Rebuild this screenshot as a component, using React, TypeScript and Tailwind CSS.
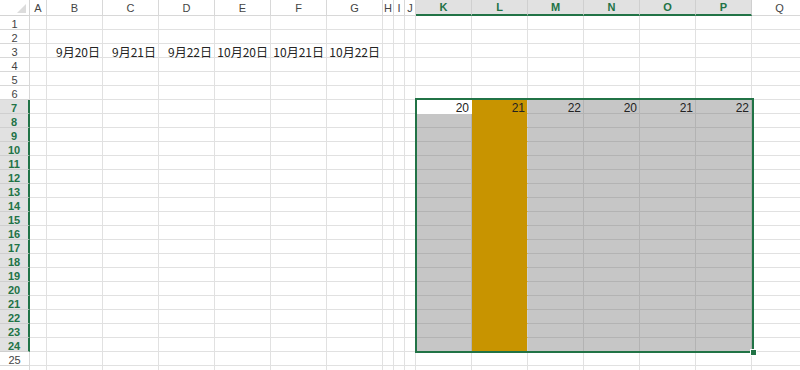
import React from "react";

const COLS = ["A", "B", "C", "D", "E", "F", "G", "H", "I", "J", "K", "L", "M", "N", "O", "P", "Q"];
const SEL_COLS = ["K", "L", "M", "N", "O", "P"];
const ROWS = Array.from({ length: 26 }, (_, i) => i + 1);

const dates: Record<string, string> = {
  B: "9月20日",
  C: "9月21日",
  D: "9月22日",
  E: "10月20日",
  F: "10月21日",
  G: "10月22日",
};

const row7: Record<string, string> = { K: "20", L: "21", M: "22", N: "20", O: "21", P: "22" };

const inSel = (col: string, row: number) => SEL_COLS.includes(col) && row >= 7 && row <= 24;

const cellClass = (col: string, row: number) => {
  if (!inSel(col, row)) return "border-r border-b border-[#e1e1e1] bg-white";
  if (col === "K" && row === 7) return "border-r border-b border-[#ffffff] bg-white";
  if (col === "L") return "border-r border-b border-r-[#d0d0d0] border-b-[#c89400] bg-[#c89400]";
  return "border-r border-b border-[#b3b3b3] bg-[#c6c6c6]";
};

const CornerTriangle = () => (
  <svg width="9" height="9" viewBox="0 0 9 9" className="absolute right-[3px] bottom-[2px]">
    <polygon points="9,0 9,9 0,9" fill="#dcdcdc" />
  </svg>
);

const App = () => {
  return (
    <div
      className="relative w-[800px] h-[370px] overflow-hidden bg-white text-[#333]"
      style={{ fontFamily: '"Liberation Sans", "Noto Sans CJK JP", sans-serif' }}
    >
      <div className="grid grid-cols-[30px_17px_repeat(6,56px)_repeat(3,11px)_repeat(6,56px)_56px] grid-rows-[16px_repeat(26,14px)]">
        {/* header row */}
        <div className="relative border-r border-b border-[#d4d4d4] bg-white">
          <CornerTriangle />
        </div>
        {COLS.map((c) =>
          SEL_COLS.includes(c) ? (
            <div
              key={c}
              className="flex items-center justify-center pt-[1px] border-r border-r-[#cfcfcf] border-b-2 border-b-[#217346] bg-[#e1e1e1] text-[11px] font-bold text-[#217346] leading-none"
            >
              {c}
            </div>
          ) : (
            <div
              key={c}
              className="flex items-center justify-center pt-[1px] border-r border-b border-[#d8d8d8] bg-white text-[11px] text-[#444] leading-none"
            >
              {c}
            </div>
          )
        )}

        {ROWS.map((r) => (
          <React.Fragment key={r}>
            {r >= 7 && r <= 24 ? (
              <div className="flex items-center justify-center pt-[3px] border-r-2 border-r-[#217346] border-b border-b-[#cfcfcf] bg-[#e1e1e1] text-[11px] font-bold text-[#217346] leading-none">
                {r}
              </div>
            ) : (
              <div className="flex items-center justify-center pt-[3px] border-r border-b border-[#d8d8d8] bg-white text-[11px] text-[#444] leading-none">
                {r <= 25 ? r : ""}
              </div>
            )}
            {COLS.map((c) => (
              <div key={c} className={`flex items-center justify-end pt-[3px] pr-[2px] whitespace-nowrap overflow-visible ${cellClass(c, r)}`}>
                {r === 3 && dates[c] ? (
                  <span className="text-[12px] leading-none text-[#222]" style={{ fontFamily: '"Noto Sans CJK JP", sans-serif' }}>
                    {dates[c]}
                  </span>
                ) : null}
                {r === 7 && row7[c] ? <span className="text-[12px] leading-none text-[#222]">{row7[c]}</span> : null}
              </div>
            ))}
          </React.Fragment>
        ))}
      </div>

      {/* selection border */}
      <div className="pointer-events-none absolute left-[415px] top-[98px] w-[339px] h-[255px] border-2 border-[#217346]" />
      {/* fill handle */}
      <div className="pointer-events-none absolute left-[750px] top-[349px] w-[7px] h-[7px] bg-[#217346] border border-white" />
    </div>
  );
};

export default App;
